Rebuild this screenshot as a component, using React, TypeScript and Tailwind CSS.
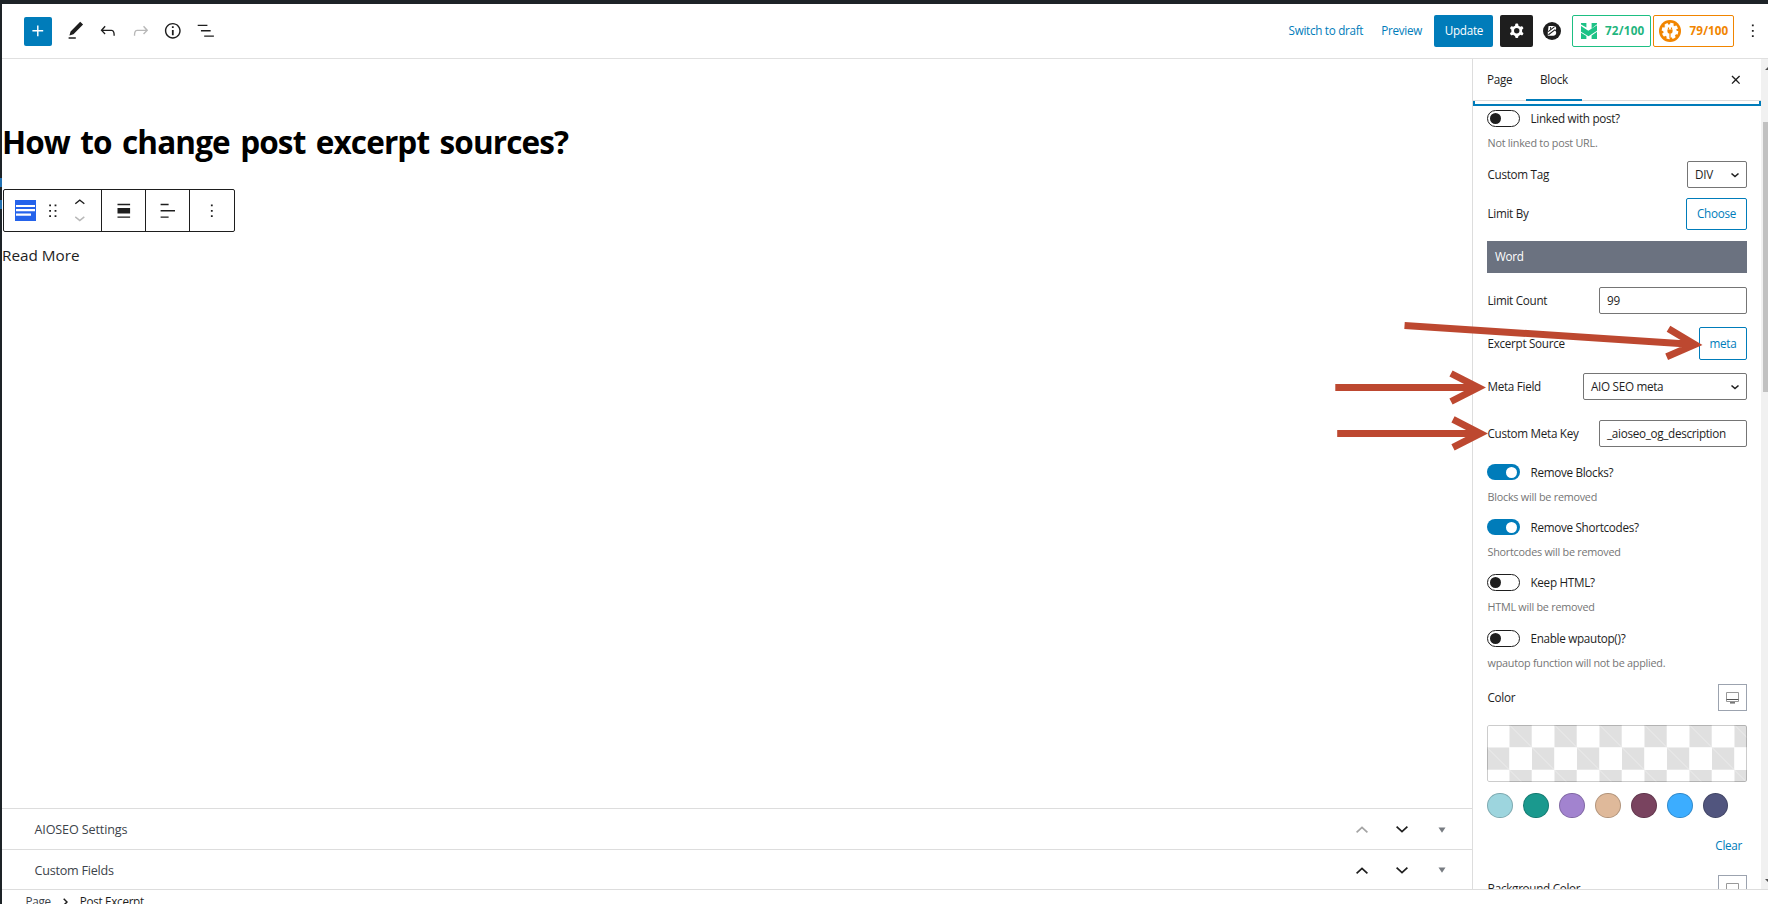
import type { ReactNode } from 'react';

const PATHS = {
  plus: 'M18 11.2h-5.2V6h-1.6v5.2H6v1.6h5.2V18h1.6v-5.2H18z',
  pencil: 'M20.1 5.1L16.9 2 6.2 12.7l-1.3 4.4 4.5-1.3L20.1 5.1zM4 20.8h8v-1.5H4v1.5z',
  undo: 'M18.3 11.7c-.6-.6-1.4-.9-2.3-.9H6.7l2.9-3.3-1.1-1-4.5 5L8.5 16l1-1-2.7-2.7H16c.5 0 .9.2 1.3.5 1 1 1 3.4 1 4.5v.3h1.5v-.2c0-1.5 0-4.3-1.5-5.7z',
  redo: 'M15.6 6.5l-1.1 1 2.9 3.3H8c-.9 0-1.7.3-2.3.9-1.4 1.5-1.4 4.2-1.4 5.6v.2h1.5v-.3c0-1.1 0-3.5 1-4.5.3-.3.7-.5 1.3-.5h9.2L14.5 15l1.1 1.1 4.6-4.6-4.6-5z',
  info: 'M12 3.2c-4.8 0-8.8 3.9-8.8 8.8 0 4.8 3.9 8.8 8.8 8.8 4.8 0 8.8-3.9 8.8-8.8 0-4.8-4-8.8-8.8-8.8zm0 16c-4 0-7.2-3.3-7.2-7.2C4.8 8 8 4.8 12 4.8s7.2 3.3 7.2 7.2c0 4-3.2 7.2-7.2 7.2zM11 17h2v-6h-2v6zm0-8h2V7h-2v2z',
  list: 'M13.8 5.2H3v1.5h10.8V5.2zm-3.6 12v1.5H21v-1.5H10.2zm7.2-6H6.6v1.5h10.8v-1.5z',
  cog: 'M10.289 4.836A1 1 0 0111.275 4h1.306a1 1 0 01.987.836l.244 1.466c.787.26 1.503.679 2.108 1.218l1.393-.522a1 1 0 011.216.437l.653 1.13a1 1 0 01-.23 1.273l-1.148.944a6.025 6.025 0 010 2.435l1.149.946a1 1 0 01.23 1.272l-.653 1.13a1 1 0 01-1.216.437l-1.394-.522c-.605.54-1.32.958-2.108 1.218l-.244 1.466a1 1 0 01-.987.836h-1.306a1 1 0 01-.986-.836l-.244-1.466a5.995 5.995 0 01-2.108-1.218l-1.394.522a1 1 0 01-1.217-.436l-.653-1.131a1 1 0 01.23-1.272l1.149-.946a6.026 6.026 0 010-2.435l-1.148-.944a1 1 0 01-.23-1.272l.653-1.131a1 1 0 011.217-.437l1.393.522a5.994 5.994 0 012.108-1.218l.244-1.466zM14.929 12a3 3 0 11-6 0 3 3 0 016 0z',
  more: 'M13 19h-2v-2h2v2zm0-6h-2v-2h2v2zm0-6h-2V5h2v2z',
  close: 'M12 13.06l3.712 3.713 1.061-1.06L13.061 12l3.712-3.712-1.06-1.06L12 10.938 8.288 7.227l-1.061 1.06L10.939 12l-3.712 3.712 1.06 1.061L12 13.061z',
  drag: 'M8 7h2V5H8v2zm0 6h2v-2H8v2zm0 6h2v-2H8v2zm6-14v2h2V5h-2zm0 8h2v-2h-2v2zm0 6h2v-2h-2v2z',
  up: 'M6.5 12.4L12 8l5.5 4.4-.9 1.2L12 10l-4.5 3.6-1-1.2z',
  down: 'M17.5 11.6L12 16l-5.5-4.4.9-1.2L12 14l4.5-3.6 1 1.2z',
  align: 'M5 15h14V9H5v6zm0 4.8h14v-1.5H5v1.5zM5 4.2v1.5h14V4.2H5z',
  alignLeft: 'M4 19.8h8.9v-1.5H4v1.5zm8.9-15.6H4v1.5h8.9V4.2zm-8.9 7v1.5h16v-1.5H4z',
};

function Icon({ name, className = '' }: { name: keyof typeof PATHS; className?: string }) {
  return (
    <svg viewBox="0 0 24 24" className={`h-[21.6px] w-[21.6px] shrink-0 fill-current ${className}`}>
      <path fillRule="evenodd" d={PATHS[name]} />
    </svg>
  );
}

function Row({ label, className, children }: { label: string; className: string; children: ReactNode }) {
  return (
    <div className={`flex shrink-0 items-center justify-between ${className}`}>
      <span className="pl-[0.5px]">{label}</span>
      {children}
    </div>
  );
}

function Toggle({ on }: { on: boolean }) {
  return on ? (
    <span className="flex h-4 w-[33px] items-center justify-end rounded-full bg-[#007cba] pr-[3px]">
      <span className="h-[11px] w-[11px] rounded-full bg-white" />
    </span>
  ) : (
    <span className="flex h-[17px] w-[33px] items-center rounded-full border border-[#1e1e1e] bg-white pl-[2px]">
      <span className="h-[11px] w-[11px] rounded-full bg-[#1e1e1e]" />
    </span>
  );
}

function ToggleGroup({ label, help, on = false, className = '' }: { label: string; help: string; on?: boolean; className?: string }) {
  return (
    <div className={`shrink-0 ${className}`}>
      <div className="flex h-7 items-center gap-[10.5px]">
        <Toggle on={on} />
        <span className="relative top-px">{label}</span>
      </div>
      <div className="flex h-[22px] items-center pl-[0.5px] text-[10.8px] tracking-[-0.24px] text-[#757575]">{help}</div>
    </div>
  );
}

function SelectBox({ value, className }: { value: string; className: string }) {
  return (
    <div className={`flex h-[27px] items-center justify-between rounded-[2px] border border-[#757575] pr-[6px] pl-[7px] ${className}`}>
      <span>{value}</span>
      <svg viewBox="0 0 10 10" className="h-[10px] w-[10px] fill-none stroke-[#1e1e1e] stroke-[1.6]">
        <path d="M1.5 3.5L5 6.5l3.5-3" />
      </svg>
    </div>
  );
}

function Outline({ label, className }: { label: string; className: string }) {
  return (
    <div className={`flex shrink-0 items-center justify-center rounded-[2px] border border-[#007cba] text-[#007cba] ${className}`}>
      {label}
    </div>
  );
}

function DeviceButton() {
  return (
    <div className="flex h-[27px] w-[29px] items-center justify-center border border-[#9ca3af]">
      <svg viewBox="0 0 13 13" className="h-[13px] w-[13px] fill-none stroke-[#999]">
        <path d="M.5 1.5h12v9H.5z" />
        <path d="M.5 8.5h12" className="stroke-[#555]" />
        <path d="M4 11.8h5" className="stroke-[#777] stroke-[1.6]" />
      </svg>
    </div>
  );
}

function MetaPanel({ title, first = false }: { title: string; first?: boolean }) {
  return (
    <div className={`flex shrink-0 items-center border-t border-[#ddd] pl-[32.5px] text-[12.6px] text-[#3c434a] ${first ? 'h-[41px]' : 'h-10'}`}>
      <span className={`grow font-medium ${first ? 'pt-[2px] tracking-[-0.14px]' : 'pt-[3px] tracking-[-0.24px]'}`}>{title}</span>
      <div className="flex items-center pt-px pr-[26px] text-[#1e1e1e]">
        <svg viewBox="0 0 12 7" className={`h-[7px] w-3 fill-none stroke-current stroke-[1.7] ${first ? 'opacity-40' : ''}`}>
          <path d="M.6 6.3L6 1.3l5.4 5" />
        </svg>
        <svg viewBox="0 0 12 7" className="ml-[28px] h-[7px] w-3 fill-none stroke-current stroke-[1.7]">
          <path d="M.6.7L6 5.7l5.4-5" />
        </svg>
        <svg viewBox="0 0 8 6" className="ml-[30px] h-[6px] w-2 fill-[#787c82]">
          <path d="M.5.5h7L4 5.8z" />
        </svg>
      </div>
    </div>
  );
}

const SWATCHES = ['bg-[#9dd5de]', 'bg-[#1a998e]', 'bg-[#a283cf]', 'bg-[#dfb99a]', 'bg-[#79435f]', 'bg-[#3cadff]', 'bg-[#51557e]'];

function Checker() {
  const cells = [];
  for (let r = 0; r < 3; r++)
    for (let c = 0; c < 12; c++) if ((r + c) % 2 === 1) cells.push([c * 22.5, r * 22.5]);
  return (
    <svg className="mt-1 h-[57px] w-[260px] shrink-0 rounded-[2px]">
      {cells.map(([x, y]) => (
        <g key={`${x}-${y}`}>
          <rect x={x} y={y} width="22.2" height="22.2" fill="#e0e0e0" />
          <path d={`M${x} ${y}l22.2 22.2`} stroke="#ececec" strokeWidth="1" />
        </g>
      ))}
      <rect x=".5" y=".5" width="259" height="56" rx="1.5" fill="none" stroke="#000" strokeOpacity=".2" />
    </svg>
  );
}

function Arrow({ transform, length }: { transform: string; length: number }) {
  return (
    <g transform={transform}>
      <path d={`M${-length} 0H-8M-35 -14L-7.7 0L-35 14`} />
    </g>
  );
}

export default function App() {
  return (
    <div className="relative flex h-[904px] w-[1768px] flex-col overflow-hidden bg-white pt-1 pl-[2px] font-['Open_Sans','Noto_Sans',sans-serif] text-[11.7px] leading-none tracking-[-0.3px] whitespace-nowrap text-[#1e1e1e]">
      <div className="absolute top-0 left-0 h-1 w-full bg-[#1d2327]" />
      <div className="absolute top-0 left-0 flex h-full w-[2px] flex-col bg-[#1d2327] pt-[178px]">
        <div className="h-[9px] bg-[#2271b1]" />
        <div className="mt-[13px] h-[9px] bg-[#2271b1]" />
      </div>

      <header className="flex h-[55px] shrink-0 items-center border-b border-[#e0e0e0]">
        <div className="ml-[22px] flex h-[29px] w-7 items-center justify-center rounded-[2px] bg-[#007cba] text-white">
          <Icon name="plus" />
        </div>
        <div className="ml-[13px] flex gap-[10.8px]">
          <Icon name="pencil" />
          <Icon name="undo" />
          <Icon name="redo" className="text-[#b8b8b8]" />
          <Icon name="info" />
          <Icon name="list" />
        </div>
        <div className="grow" />
        <span className="text-[#007cba]">Switch to draft</span>
        <span className="ml-[18px] text-[#007cba]">Preview</span>
        <div className="ml-[12.5px] flex h-8 w-[59px] items-center justify-center rounded-[2px] bg-[#007cba] text-white">Update</div>
        <div className="ml-[7px] flex h-8 w-[33px] items-center justify-center rounded-[2px] bg-[#1e1e1e] text-white">
          <Icon name="cog" />
        </div>
        <svg viewBox="0 0 18 18" className="ml-[10px] h-[18px] w-[18px]">
          <circle cx="9" cy="9" r="9" fill="#1e1e1e" />
          <path d="M5.6 4h5.2c3 .2 3 3.6 1 4.5 2.4 1.2 1.6 5.2-1.4 5.3H4.8V10z" fill="#fff" />
          <path d="M5.2 9.6L11.6 4.6M5.4 12.8l6.8-5.2" stroke="#1e1e1e" strokeWidth="1.1" />
          <path d="M7.6 5v2.6" stroke="#1e1e1e" strokeWidth=".9" />
        </svg>
        <div className="ml-[11px] flex h-8 w-[79px] items-center justify-between rounded-[2px] border border-[#1dbf83] pr-[6px] pl-2 text-[11.7px] font-bold tracking-[0.2px] text-[#1fb57e]">
          <svg viewBox="0 0 16 16" className="h-4 w-4 fill-[#1dc286]">
            <path d="M0 0h5.4v4.6L0 1.6zM10.6 0H16v1.2l-5.4 4.2zM0 3l7.3 4.8L16 2.2v5.6l-8.5 5.4L0 8.8zM0 9.8l5.4 3.2v3H0zM10.6 12.4l5.4-3.6V16h-5.4z" />
          </svg>
          72/100
        </div>
        <div className="ml-[2px] flex h-8 w-[81px] items-center justify-between rounded-[2px] border border-[#f18500] pr-[5px] pl-[5px] text-[11.7px] font-bold tracking-[0.1px] text-[#f18500]">
          <svg viewBox="0 0 22 22" className="h-[22px] w-[22px]">
            <circle cx="11" cy="11" r="11" fill="#f18500" />
            <circle cx="11" cy="11" r="6.8" fill="#fff" />
            <circle cx="11" cy="11" r="7.2" fill="none" stroke="#fff" strokeWidth="2.2" strokeDasharray="3.4 2.25" />
            <path d="M9.5 7.6v2M12.5 7.6v2M11 13v5.4" stroke="#f18500" strokeWidth="1.2" />
            <path d="M8.4 9.4h5.2v1.6a2.6 2.6 0 01-5.2 0z" fill="#f18500" />
          </svg>
          79/100
        </div>
        <Icon name="more" className="mr-1 ml-[8px]" />
      </header>

      <div className="flex h-[830px] shrink-0">
        <main className="flex w-[1470px] flex-col">
          <h1 className="mt-[63px] text-[31.5px] leading-[40px] font-bold tracking-[-0.87px] text-black [word-spacing:3px]">How to change post excerpt sources?</h1>
          <div className="mt-[27px] ml-px flex h-[43px] w-[232px] shrink-0 rounded-[2px] border border-[#1e1e1e]">
            <div className="flex w-[98px] items-center border-r border-[#1e1e1e] pl-[11px]">
              <svg viewBox="0 0 21 21" className="h-[21px] w-[21px]">
                <path d="M0 0h21v21H0z" fill="#2563eb" />
                <path d="M1 6h19M1 10.2h19M1 14.7h15" stroke="#fff" strokeWidth="2.2" />
              </svg>
              <Icon name="drag" className="ml-[6px]" />
              <div className="ml-[5px] flex flex-col">
                <Icon name="up" className="-mb-[7px]" />
                <Icon name="down" className="text-[#b8b8b8]" />
              </div>
            </div>
            <div className="flex w-11 items-center justify-center border-r border-[#1e1e1e]"><Icon name="align" /></div>
            <div className="flex w-11 items-center justify-center border-r border-[#1e1e1e]"><Icon name="alignLeft" /></div>
            <div className="flex grow items-center justify-center"><Icon name="more" /></div>
          </div>
          <p className="mt-3 text-[15.3px] leading-[22px] tracking-[0px]">Read More</p>
          <div className="grow" />
          <MetaPanel title="AIOSEO Settings" first />
          <MetaPanel title="Custom Fields" />
        </main>

        <aside className="flex w-[289px] shrink-0 flex-col overflow-hidden border-l border-[#ddd]">
          <div className="flex h-[42px] shrink-0 border-b border-[#ddd]">
            <div className="flex w-[53px] items-center pl-[14px]">Page</div>
            <div className="flex h-[42px] w-14 items-center justify-center border-b-2 border-[#007cba] pt-px">Block</div>
            <div className="flex grow items-center justify-end pr-[14px]"><Icon name="close" /></div>
          </div>
          <div className="h-[5px] shrink-0 border-x-2 border-b-2 border-[#007cba]" />
          <div className="flex h-[783px] flex-col overflow-hidden pr-[14px] pl-[14px]">
            <ToggleGroup label="Linked with post?" help="Not linked to post URL." className="-mt-[2px] h-[51px]" />
            <Row label="Custom Tag" className="h-[39px]"><SelectBox value="DIV" className="w-[60px]" /></Row>
            <Row label="Limit By" className="h-10"><Outline label="Choose" className="h-8 w-[61px]" /></Row>
            <div className="mt-[7px] flex h-8 shrink-0 items-center bg-[#6b7280] pl-2 font-medium text-white">Word</div>
            <Row label="Limit Count" className="h-[55px]">
              <div className="flex h-[27px] w-[148px] items-center rounded-[2px] border border-[#757575] pl-[7px]">99</div>
            </Row>
            <Row label="Excerpt Source" className="h-[31px]"><Outline label="meta" className="h-[33px] w-12" /></Row>
            <Row label="Meta Field" className="h-[55px]"><SelectBox value="AIO SEO meta" className="w-[164px]" /></Row>
            <Row label="Custom Meta Key" className="h-[39px]">
              <div className="flex h-[27px] w-[148px] items-center rounded-[2px] border border-[#757575] pl-[7px]">_aioseo_og_description</div>
            </Row>
            <ToggleGroup on label="Remove Blocks?" help="Blocks will be removed" className="mt-[5px] h-[55px]" />
            <ToggleGroup on label="Remove Shortcodes?" help="Shortcodes will be removed" className="h-[55px]" />
            <ToggleGroup label="Keep HTML?" help="HTML will be removed" className="h-[56px]" />
            <ToggleGroup label="Enable wpautop()?" help="wpautop function will not be applied." className="h-[50px]" />
            <Row label="Color" className="h-[47px]"><DeviceButton /></Row>
            <Checker />
            <div className="mt-[11px] flex shrink-0 gap-[10.8px] pl-[0.4px]">
              {SWATCHES.map((c) => (
                <span key={c} className={`h-[25.2px] w-[25.2px] rounded-full border border-black/20 ${c}`} />
              ))}
            </div>
            <div className="flex h-14 shrink-0 items-center justify-end pr-[5px] text-[#007cba]">Clear</div>
            <Row label="Background Color" className="mt-px h-[27px]"><DeviceButton /></Row>
          </div>
        </aside>

        <div className="flex w-[7px] flex-col items-end bg-[#f1f1f1] pt-[63px]">
          <div className="h-[270px] w-[5px] bg-[#c1c1c1]" />
        </div>
      </div>

      <footer className="flex h-[15px] items-start overflow-hidden border-t border-[#ddd] pt-[6px] pl-[23.5px]">
        <span className="text-[#3c434a]">Page</span>
        <svg viewBox="0 0 5 8" className="mx-3 mt-[2px] h-2 w-[5px] fill-none stroke-[#1e1e1e] stroke-[1.5]">
          <path d="M.7.7L4 4 .7 7.3" />
        </svg>
        <span>Post Excerpt</span>
      </footer>

      <svg className="absolute top-0 left-0 h-[904px] w-[1768px] fill-none stroke-[#bd4830] stroke-7">
        <Arrow transform="translate(1702.5 345) rotate(3.74)" length={298.6} />
        <Arrow transform="translate(1486 387.5)" length={150.7} />
        <Arrow transform="translate(1488 433.4)" length={150.8} />
        <path d="M1765 70l3-3v3zM1765 879h3v3z" className="fill-[#505050] stroke-none" />
      </svg>
    </div>
  );
}
